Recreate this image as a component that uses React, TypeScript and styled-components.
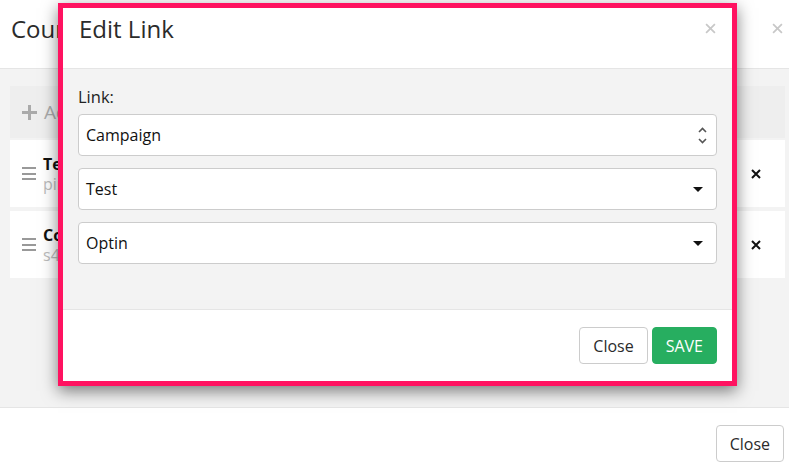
import React from "react";
import styled, { createGlobalStyle } from "styled-components";

const Global = createGlobalStyle`
  html, body { margin: 0; padding: 0; }
  body {
    font-family: "Open Sans", "Liberation Sans", sans-serif;
    color: #333;
    background: #fff;
    overflow: hidden;
  }
  * { box-sizing: border-box; }
`;

const Page = styled.div`
  position: relative;
  width: 789px;
  height: 476px;
  display: flex;
  flex-direction: column;
  background: #fff;
`;

const Header = styled.div<{ $outer?: boolean }>`
  display: flex;
  align-items: center;
  justify-content: space-between;
  height: ${(p) => (p.$outer ? 69 : 61)}px;
  padding: ${(p) => (p.$outer ? "0 6px 11px 11px" : "0 16px 20px 16px")};
  border-bottom: 1px solid #e5e5e5;
  background: #fff;
  flex-shrink: 0;
`;

const Title = styled.h4`
  margin: 0;
  font-size: 24px;
  line-height: 29px;
  font-weight: 400;
  color: #2b2b2b;
  white-space: nowrap;
`;

const CloseX = styled.button`
  border: 0;
  background: none;
  padding: 0;
  width: 12px;
  height: 12px;
  display: flex;
  align-items: center;
  justify-content: center;
  cursor: pointer;
`;

const OuterBody = styled.div`
  flex: 1;
  background: #f3f3f3;
  padding: 17px 4px 0 10px;
  display: flex;
  flex-direction: column;
`;

const AddRow = styled.div`
  height: 52px;
  background: #eeeeee;
  display: flex;
  align-items: center;
  gap: 7px;
  padding-left: 12px;
  margin-bottom: 2px;
  color: #aaa;
  font-size: 19px;
`;

const PlusIcon = styled.span`
  position: relative;
  width: 15px;
  height: 15px;
  &::before, &::after {
    content: "";
    position: absolute;
    background: #aaa;
  }
  &::before { left: 0; right: 0; top: 6px; height: 3px; }
  &::after { top: 0; bottom: 0; left: 6px; width: 3px; }
`;

const ItemRow = styled.div`
  height: 67px;
  background: #fff;
  display: flex;
  align-items: center;
  padding: 0 24px 0 12px;
  margin-bottom: 4px;
  gap: 7px;
`;

const Hamburger = styled.span`
  width: 14px;
  display: flex;
  flex-direction: column;
  gap: 3.5px;
  & > i {
    display: block;
    height: 2px;
    background: #999;
  }
`;

const ItemText = styled.div`
  flex: 1;
  display: flex;
  flex-direction: column;
  line-height: 20px;
  font-size: 16px;
`;

const ItemTitle = styled.span`
  font-weight: 700;
  color: #111;
`;

const ItemSub = styled.span`
  color: #bbb;
`;

const Footer = styled.div<{ $outer?: boolean }>`
  flex-shrink: 0;
  display: flex;
  justify-content: flex-end;
  align-items: flex-start;
  gap: 4px;
  border-top: 1px solid #e5e5e5;
  background: #fff;
  height: ${(p) => (p.$outer ? 69 : 72)}px;
  padding: ${(p) => (p.$outer ? "17px 5px 0 0" : "17px 15px 0 0")};
`;

const Button = styled.button<{ $primary?: boolean }>`
  height: 37px;
  padding: 0 13px;
  border-radius: 4px;
  font-family: "Open Sans", "Liberation Sans", sans-serif;
  font-size: 16px;
  line-height: 20px;
  border: 1px solid ${(p) => (p.$primary ? "#27ae60" : "#ccc")};
  background: ${(p) => (p.$primary ? "#27ae60" : "#fff")};
  color: ${(p) => (p.$primary ? "#fff" : "#2b2b2b")};
  cursor: pointer;
`;

const Modal = styled.div`
  position: absolute;
  left: 58px;
  top: 3px;
  width: 679px;
  border: 5px solid #ff1260;
  background: #fff;
  box-shadow: 0 5px 15px rgba(0, 0, 0, 0.5);
  display: flex;
  flex-direction: column;
`;

const ModalBody = styled.div`
  height: 240px;
  background: #f3f3f3;
  padding: 18px 15px 0 15px;
  display: flex;
  flex-direction: column;
`;

const Label = styled.label`
  font-size: 16.5px;
  line-height: 20px;
  color: #222;
  margin-bottom: 7px;
`;

const Fields = styled.div`
  display: flex;
  flex-direction: column;
  gap: 12px;
`;

const SelectBox = styled.div<{ $pr: number }>`
  height: 42px;
  background: #fff;
  border: 1px solid #ccc;
  border-radius: 4px;
  display: flex;
  align-items: center;
  justify-content: space-between;
  padding: 0 ${(p) => p.$pr}px 0 7px;
  font-size: 16px;
  color: #111;
`;

const SmallX = ({ color, size, width }: { color: string; size: number; width: number }) => (
  <svg width={size} height={size} viewBox="0 0 10 10">
    <path d="M1 1 L9 9 M9 1 L1 9" stroke={color} strokeWidth={width} strokeLinecap="butt" />
  </svg>
);

const UpDown = () => (
  <svg width="9" height="17" viewBox="0 0 9 17">
    <path d="M1 5 L4.5 1.5 L8 5" fill="none" stroke="#555" strokeWidth="1.6" />
    <path d="M1 12 L4.5 15.5 L8 12" fill="none" stroke="#555" strokeWidth="1.6" />
  </svg>
);

const Caret = () => (
  <svg width="10" height="5" viewBox="0 0 10 5">
    <path d="M0 0 L10 0 L5 5 Z" fill="#111" />
  </svg>
);

export default function App() {
  return (
    <>
      <Global />
      <Page>
        <Header $outer>
          <Title>Course Links</Title>
          <CloseX aria-label="close">
            <SmallX color="#c8c8c8" size={11} width={1.6} />
          </CloseX>
        </Header>
        <OuterBody>
          <AddRow>
            <PlusIcon />
            <span>Add Link</span>
          </AddRow>
          <ItemRow>
            <Hamburger>
              <i />
              <i />
              <i />
            </Hamburger>
            <ItemText>
              <ItemTitle>Test</ItemTitle>
              <ItemSub>pin-test</ItemSub>
            </ItemText>
            <SmallX color="#111" size={10} width={2} />
          </ItemRow>
          <ItemRow>
            <Hamburger>
              <i />
              <i />
              <i />
            </Hamburger>
            <ItemText>
              <ItemTitle>Course</ItemTitle>
              <ItemSub>s4-optin</ItemSub>
            </ItemText>
            <SmallX color="#111" size={10} width={2} />
          </ItemRow>
        </OuterBody>
        <Footer $outer>
          <Button>Close</Button>
        </Footer>

        <Modal>
          <Header>
            <Title>Edit Link</Title>
            <CloseX aria-label="close">
              <SmallX color="#c8c8c8" size={11} width={1.6} />
            </CloseX>
          </Header>
          <ModalBody>
            <Label>Link:</Label>
            <Fields>
              <SelectBox $pr={9}>
                <span>Campaign</span>
                <UpDown />
              </SelectBox>
              <SelectBox $pr={13}>
                <span>Test</span>
                <Caret />
              </SelectBox>
              <SelectBox $pr={13}>
                <span>Optin</span>
                <Caret />
              </SelectBox>
            </Fields>
          </ModalBody>
          <Footer>
            <Button>Close</Button>
            <Button $primary>SAVE</Button>
          </Footer>
        </Modal>
      </Page>
    </>
  );
}
